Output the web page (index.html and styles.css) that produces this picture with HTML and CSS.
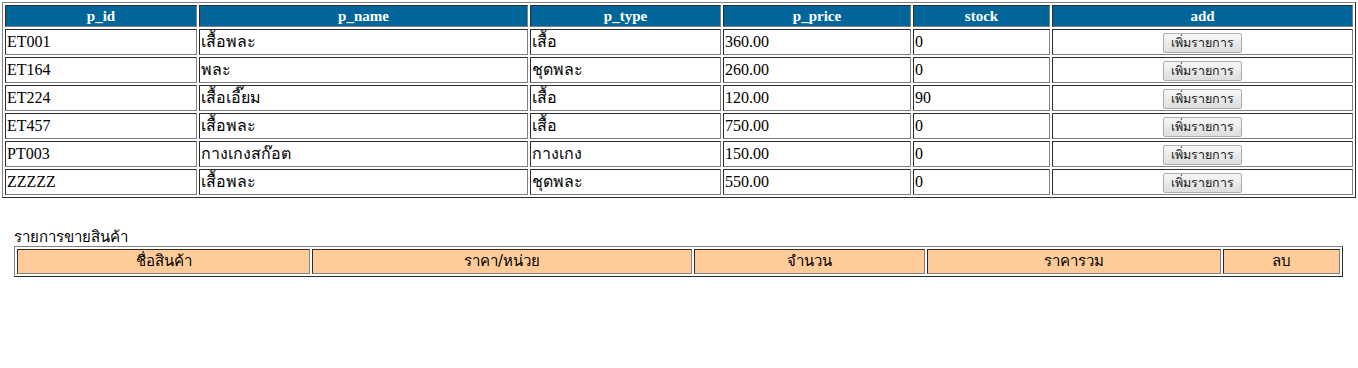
FILE: index.html
```html
<!DOCTYPE html>
<html>
<head>
<meta charset="utf-8">
<title>Products</title>
<link rel="stylesheet" href="styles.css">
</head>
<body>
<table class="products">
  <thead>
    <tr>
      <th class="c-id">p_id</th>
      <th class="c-name">p_name</th>
      <th class="c-type">p_type</th>
      <th class="c-price">p_price</th>
      <th class="c-stock">stock</th>
      <th class="c-add">add</th>
    </tr>
  </thead>
  <tbody>
    <tr><td>ET001</td><td>เสื้อพละ</td><td>เสื้อ</td><td>360.00</td><td>0</td><td class="add"><button class="btn">เพิ่มรายการ</button></td></tr>
    <tr><td>ET164</td><td>พละ</td><td>ชุดพละ</td><td>260.00</td><td>0</td><td class="add"><button class="btn">เพิ่มรายการ</button></td></tr>
    <tr><td>ET224</td><td>เสื้อเอี๊ยม</td><td>เสื้อ</td><td>120.00</td><td>90</td><td class="add"><button class="btn">เพิ่มรายการ</button></td></tr>
    <tr><td>ET457</td><td>เสื้อพละ</td><td>เสื้อ</td><td>750.00</td><td>0</td><td class="add"><button class="btn">เพิ่มรายการ</button></td></tr>
    <tr><td>PT003</td><td>กางเกงสก๊อต</td><td>กางเกง</td><td>150.00</td><td>0</td><td class="add"><button class="btn">เพิ่มรายการ</button></td></tr>
    <tr><td>ZZZZZ</td><td>เสื้อพละ</td><td>ชุดพละ</td><td>550.00</td><td>0</td><td class="add"><button class="btn">เพิ่มรายการ</button></td></tr>
  </tbody>
</table>

<div class="sales">
  <div class="caption">รายการขายสินค้า</div>
  <table class="cart">
    <tr>
      <th class="k-name">ชื่อสินค้า</th>
      <th class="k-unit">ราคา/หน่วย</th>
      <th class="k-qty">จำนวน</th>
      <th class="k-total">ราคารวม</th>
      <th class="k-del">ลบ</th>
    </tr>
  </table>
</div>
</body>
</html>
```

FILE: styles.css
```css
body {
  margin: 2px;
  font-family: "Liberation Serif", "Times New Roman", serif;
  font-size: 16px;
  color: #000;
  background: #fff;
}

table {
  border-collapse: separate;
  border-spacing: 2px;
  border: 1px outset #808080;
  table-layout: fixed;
}

th, td {
  border: 1px inset #808080;
  padding: 1px;
  box-sizing: border-box;
}

.products {
  width: 1354px;
}

.products th {
  background: #006699;
  color: #fff;
  font-weight: bold;
  font-size: 15px;
  height: 22px;
  line-height: 18px;
  text-align: center;
}

.products td {
  height: 26px;
  line-height: 20px;
  text-align: left;
  vertical-align: middle;
  white-space: nowrap;
}

.c-id { width: 192px; }
.c-name { width: 329px; }
.c-type { width: 191px; }
.c-price { width: 188px; }
.c-stock { width: 137px; }

.products td.add {
  text-align: center;
}

.btn {
  font-family: Tahoma, "DejaVu Sans", sans-serif;
  font-size: 12.5px;
  height: 20px;
  padding: 0 7px;
  line-height: 16px;
  color: #222;
  background: linear-gradient(#f7f7f7, #dddddd);
  border: 1px solid #acacac;
  border-radius: 2px;
  vertical-align: middle;
}

.sales {
  margin: 30px 0 0 12px;
}

.caption {
  font-family: Tahoma, "DejaVu Sans", sans-serif;
  font-size: 15px;
  line-height: 18px;
  height: 18px;
}

.cart {
  width: 1329px;
}

.cart th {
  background: #ffcc99;
  font-family: Tahoma, "DejaVu Sans", sans-serif;
  font-weight: normal;
  font-size: 15px;
  height: 25px;
  line-height: 21px;
  text-align: center;
}

.k-name { width: 293px; }
.k-unit { width: 380px; }
.k-qty { width: 231px; }
.k-total { width: 294px; }
```
